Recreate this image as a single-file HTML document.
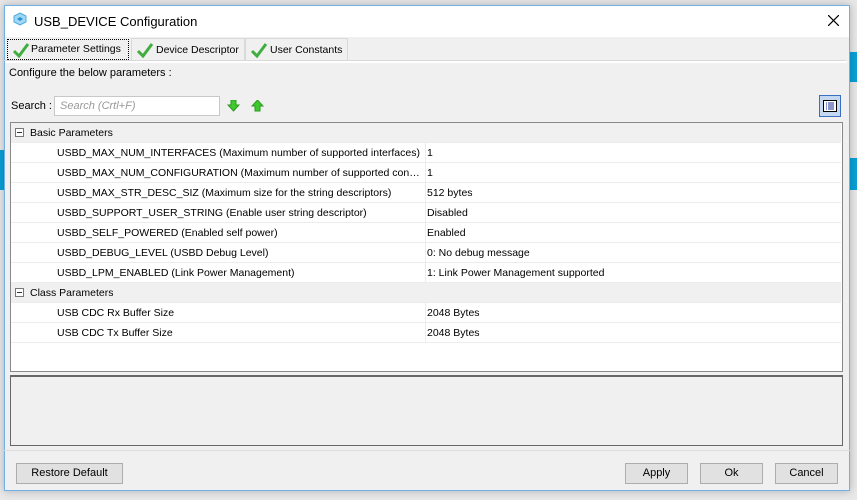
<!DOCTYPE html>
<html><head><style>
*{box-sizing:border-box;margin:0;padding:0}
body{width:857px;height:500px;background:#e8e8e8;position:relative;overflow:hidden;font-family:"Liberation Sans",sans-serif;font-size:11px;color:#000}
.a{position:absolute}
.dlg{left:4px;top:5px;width:846px;height:486px;background:#f0f0f0;border:1px solid #6fb0e8;box-shadow:0 0 8px rgba(0,0,0,.25)}
.row{position:absolute;left:11px;width:830px;height:20px;background:#fff;border-bottom:1px solid #ececec;font-size:10.5px}
.row .k{position:absolute;left:46px;top:4px;white-space:nowrap;overflow:hidden;text-overflow:ellipsis;max-width:364px}
.row .v{position:absolute;left:416px;top:4px;white-space:nowrap}
.row .d{position:absolute;left:414px;top:0;width:1px;height:20px;background:#ececec}
.hdr{background:#f0f0f0}
.hdr .k{left:19px}
.box{position:absolute;left:4px;top:5px;width:9px;height:9px;border:1px solid #777;background:#fff}
.box:after{content:"";position:absolute;left:1px;top:3px;width:5px;height:1px;background:#333}
.btn{position:absolute;top:463px;height:21px;background:#e1e1e1;border:1px solid #adadad;text-align:center;line-height:19px}
.tab{position:absolute;top:38px;height:22px;border:1px solid #d9d9d9;border-bottom:none;background:#f0f0f0;padding-left:24px;line-height:22px;font-size:10.5px}
.ck{position:absolute;left:4px;top:3px}
</style></head><body>
<div class="a" style="left:850px;top:52px;width:7px;height:30px;background:#0aa0d8"></div>
<div class="a" style="left:850px;top:158px;width:7px;height:32px;background:#0aa0d8"></div>
<div class="a" style="left:0;top:150px;width:4px;height:40px;background:#0aa0d8"></div>
<div class="a dlg"></div>
<div class="a" style="left:5px;top:6px;width:844px;height:31px;background:#fff"></div>
<svg class="a" style="left:13px;top:12px" width="14" height="14" viewBox="0 0 14 14"><path d="M7 1 L13 4 L13 10 L7 13 L1 10 L1 4Z" fill="#9fd8f5" stroke="#4aa8dc"/><path d="M7 5 L10 7 L7 9 L4 7Z" fill="#2a8fd0"/></svg>
<div class="a" style="left:34px;top:14px;font-size:13px">USB_DEVICE Configuration</div>
<svg class="a" style="left:828px;top:15px" width="11" height="11"><path d="M0 0L11 11M11 0L0 11" stroke="#000" stroke-width="1.2"/></svg>
<div class="tab" style="left:131px;width:114px">Device Descriptor<svg class="ck" width="18" height="16"><path d="M2 9 L7 14 L16 2" fill="none" stroke="#3fae3f" stroke-width="3"/></svg></div>
<div class="tab" style="left:245px;width:103px">User Constants<svg class="ck" width="18" height="16"><path d="M2 9 L7 14 L16 2" fill="none" stroke="#3fae3f" stroke-width="3"/></svg></div>
<div class="a" style="left:4px;top:60px;width:842px;height:1px;background:#d9d9d9"></div>
<div class="tab" style="left:7px;top:39px;width:122px;height:21px;border:1px dotted #000;background:#f0f0f0;line-height:19px;padding-left:23px">Parameter Settings<svg class="ck" style="top:2px" width="18" height="16"><path d="M2 9 L7 14 L16 2" fill="none" stroke="#3fae3f" stroke-width="3"/></svg></div>
<div class="a" style="left:5px;top:61px;width:842px;height:2px;background:#fff"></div>
<div class="a" style="left:9px;top:67px">Configure the below parameters :</div>
<div class="a" style="left:11px;top:100px">Search :</div>
<div class="a" style="left:54px;top:96px;width:166px;height:20px;background:#fff;border:1px solid #c8c8c8;color:#999;font-style:italic;padding:3px 5px">Search (Crtl+F)</div>
<svg class="a" style="left:227px;top:100px" width="13" height="12"><path d="M4 0H9V5H12L6.5 11L1 5H4Z" fill="#3ec92e" stroke="#2a9a1e"/></svg>
<svg class="a" style="left:251px;top:100px" width="13" height="12"><path d="M4 11H9V6H12L6.5 0L1 6H4Z" fill="#3ec92e" stroke="#2a9a1e"/></svg>
<div class="a" style="left:819px;top:95px;width:22px;height:22px;background:#c4d8f0;border:1px solid #3a6fc4"></div>
<svg class="a" style="left:823px;top:100px" width="14" height="12"><rect x=".5" y=".5" width="13" height="11" fill="#fff" stroke="#000"/><path d="M3 3h1M3 5h1M3 7h1M3 9h1M5 3h6M5 5h6M5 7h6M5 9h6" stroke="#1a2a9a"/></svg>
<div class="a" style="left:10px;top:122px;width:833px;height:250px;background:#fff;border:1px solid #888"></div>
<div class="row hdr" style="top:123px"><div class="box"></div><div class="k">Basic Parameters</div></div>
<div class="row" style="top:143px"><div class="k">USBD_MAX_NUM_INTERFACES (Maximum number of supported interfaces)</div><div class="d"></div><div class="v">1</div></div>
<div class="row" style="top:163px"><div class="k">USBD_MAX_NUM_CONFIGURATION (Maximum number of supported configurations)</div><div class="d"></div><div class="v">1</div></div>
<div class="row" style="top:183px"><div class="k">USBD_MAX_STR_DESC_SIZ (Maximum size for the string descriptors)</div><div class="d"></div><div class="v">512 bytes</div></div>
<div class="row" style="top:203px"><div class="k">USBD_SUPPORT_USER_STRING (Enable user string descriptor)</div><div class="d"></div><div class="v">Disabled</div></div>
<div class="row" style="top:223px"><div class="k">USBD_SELF_POWERED (Enabled self power)</div><div class="d"></div><div class="v">Enabled</div></div>
<div class="row" style="top:243px"><div class="k">USBD_DEBUG_LEVEL (USBD Debug Level)</div><div class="d"></div><div class="v">0: No debug message</div></div>
<div class="row" style="top:263px"><div class="k">USBD_LPM_ENABLED (Link Power Management)</div><div class="d"></div><div class="v">1: Link Power Management supported</div></div>
<div class="row hdr" style="top:283px"><div class="box"></div><div class="k">Class Parameters</div></div>
<div class="row" style="top:303px"><div class="k">USB CDC Rx Buffer Size</div><div class="d"></div><div class="v">2048 Bytes</div></div>
<div class="row" style="top:323px"><div class="k">USB CDC Tx Buffer Size</div><div class="d"></div><div class="v">2048 Bytes</div></div>
<div class="a" style="left:10px;top:375px;width:833px;height:71px;border:1px solid #666;border-top:2px solid #666;background:#f0f0f0"></div>
<div class="a" style="left:4px;top:450px;width:846px;height:1px;background:#ddd"></div>
<div class="btn" style="left:16px;width:107px">Restore Default</div>
<div class="btn" style="left:625px;width:63px">Apply</div>
<div class="btn" style="left:700px;width:63px">Ok</div>
<div class="btn" style="left:775px;width:63px">Cancel</div>
</body></html>
